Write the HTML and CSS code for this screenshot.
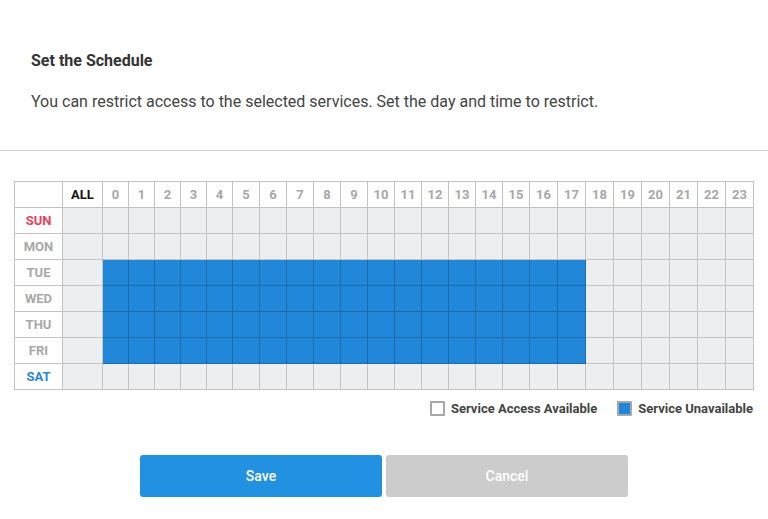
FILE: index.html
```html
<!DOCTYPE html>
<html>
<head>
<meta charset="utf-8">
<link rel="stylesheet" href="styles.css">
</head>
<body>
<div class="intro">
  <h2 class="title">Set the Schedule</h2>
  <p class="desc">You can restrict access to the selected services. Set the day and time to restrict.</p>
</div>
<div class="divider"></div>
<div class="schedule">
  <table class="grid" id="grid">
    <colgroup id="cols"></colgroup>
    <thead><tr id="head"><th class="corner"></th><th class="all">ALL</th></tr></thead>
    <tbody id="body"></tbody>
  </table>
  <div class="legend">
    <span class="legend-item"><span class="box box-free"></span>Service Access Available</span>
    <span class="legend-item"><span class="box box-busy"></span>Service Unavailable</span>
  </div>
</div>
<div class="actions">
  <button class="btn btn-save">Save</button>
  <button class="btn btn-cancel">Cancel</button>
</div>
<script src="app.js"></script>
</body>
</html>
```
FILE: styles.css
```css
* { box-sizing: border-box; }
body {
  margin: 0;
  font-family: Roboto, "Noto Sans", Arial, sans-serif;
  background: #fff;
  color: #333;
}
.intro {
  padding: 51px 31px 0;
  height: 150px;
}
.title {
  margin: 0;
  font-size: 16px;
  font-weight: 700;
  color: #333;
  line-height: 19px;
}
.desc {
  margin: 22px 0 0;
  font-size: 16px;
  color: #444;
  line-height: 19px;
}
.divider {
  height: 1px;
  background: #cfcfcf;
}
.schedule {
  padding: 30px 15px 0 14px;
}
.grid {
  border-collapse: collapse;
  table-layout: fixed;
  width: 739px;
}
.grid th, .grid td {
  border: 1px solid #c3c3c3;
  height: 26px;
  padding: 0;
  text-align: center;
  font-size: 13px;
  font-weight: 700;
}
.grid th {
  color: #a8a8a8;
  background: #fff;
}
.grid th.all { color: #111; }
.grid th.day { color: #a8a8a8; }
.grid th.sun { color: #e8425a; }
.grid th.sat { color: #2a87d8; }
.grid td { background: #eceef0; }
.grid td.on {
  background: #2188d9;
  border-color: #1b6aab;
}
.legend {
  display: flex;
  justify-content: flex-end;
  gap: 20px;
  margin-top: 11px;
  font-size: 13px;
  font-weight: 700;
  color: #444;
}
.legend-item {
  display: flex;
  align-items: center;
  gap: 6px;
}
.box {
  width: 15px;
  height: 15px;
  border: 2px solid #a8a8a8;
  border-radius: 1px;
  background: #fff;
}
.box-busy { background: #2188d9; }
.actions {
  display: flex;
  justify-content: center;
  gap: 4px;
  margin-top: 39px;
}
.btn {
  width: 242px;
  height: 42px;
  border: 0;
  border-radius: 3px;
  color: #fff;
  font-family: inherit;
  font-size: 14px;
  font-weight: 500;
}
.btn-save { background: #2391e2; }
.btn-cancel { background: #cccccc; }
```
FILE: app.js
```js
(function(){
  var widths=[48,40];
  for(var h=0;h<24;h++){ widths.push(h<5?26:(h<16?27:28)); }
  var cols=document.getElementById('cols');
  widths.forEach(function(w){var c=document.createElement('col');c.style.width=w+'px';cols.appendChild(c);});
  var head=document.getElementById('head');
  for(var h=0;h<24;h++){var th=document.createElement('th');th.textContent=h;head.appendChild(th);}
  var days=['SUN','MON','TUE','WED','THU','FRI','SAT'];
  var body=document.getElementById('body');
  days.forEach(function(d,i){
    var tr=document.createElement('tr');
    var th=document.createElement('th');
    th.textContent=d;
    th.className='day'+(i===0?' sun':(i===6?' sat':''));
    tr.appendChild(th);
    var all=document.createElement('td');tr.appendChild(all);
    for(var h=0;h<24;h++){
      var td=document.createElement('td');
      if(i>=2&&i<=5&&h<=17) td.className='on';
      tr.appendChild(td);
    }
    body.appendChild(tr);
  });
})();
```
